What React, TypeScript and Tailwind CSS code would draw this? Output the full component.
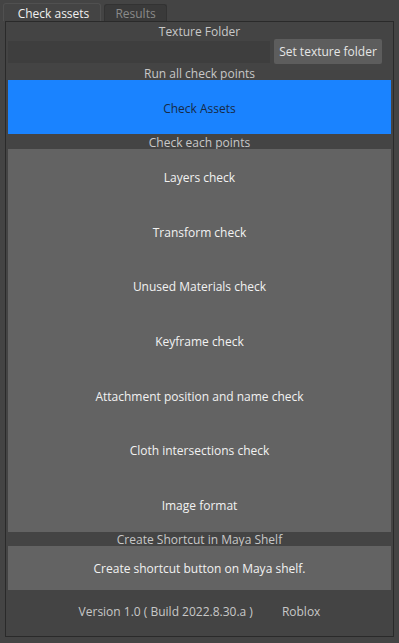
import React from 'react';

const checks = [
  'Layers check',
  'Transform check',
  'Unused Materials check',
  'Keyframe check',
  'Attachment position and name check',
  'Cloth intersections check',
  'Image format',
];

const SectionLabel: React.FC<{ text: string; className?: string }> = ({ text, className }) => (
  <div className={`text-center text-[12px] leading-[15px] text-[#c8c8c8] ${className ?? ''}`}>{text}</div>
);

const App: React.FC = () => {
  return (
    <div
      className="w-[399px] h-[643px] bg-[#444444] overflow-hidden"
      style={{ fontFamily: '"Open Sans", "Noto Sans", sans-serif' }}
    >
      {/* tabs */}
      <div className="flex items-end gap-[3px] pl-[3px] pt-[3px] h-[21px]">
        <div className="h-[18px] w-[98px] pl-[3px] pt-[1px] rounded-t-[3px] border border-b-0 border-[#505050] bg-[#444444] text-[12px] leading-[17px] text-[#f0f0f0] text-center">
          Check assets
        </div>
        <div className="h-[17px] w-[63px] pt-[1px] rounded-t-[3px] border border-b-0 border-[#333333] bg-[#3a3a3a] text-[12px] leading-[16px] text-[#8a8a8a] text-center">
          Results
        </div>
      </div>

      {/* pane */}
      <div className="mx-[5px] h-[616px] border border-[#2a2a2a] bg-[#444444] px-[2px] flex flex-col">
        <SectionLabel text="Texture Folder" className="h-[17px] pt-[2px] shrink-0" />
        <div className="flex items-center gap-[4px] h-[25px] shrink-0">
          <div className="h-[22px] w-[262px] bg-[#3e3e3e]" />
          <button className="h-[25px] w-[108px] pt-[1px] rounded-[2px] bg-[#5d5d5d] text-[12px] text-[#e6e6e6]">
            Set texture folder
          </button>
        </div>
        <SectionLabel text="Run all check points" className="h-[16px] pt-[2px] shrink-0" />
        <button className="h-[54px] w-full shrink-0 pt-[3px] bg-[#1a83ff] text-[12px] text-[#172a45]">Check Assets</button>
        <SectionLabel text="Check each points" className="h-[15px] pt-[1px] shrink-0" />
        <div className="h-[383px] shrink-0 grid grid-rows-7 bg-[#636363]">
          {checks.map(c => (
            <button key={c} className="w-full pt-[3px] text-[12px] text-[#f2f2f2]">
              {c}
            </button>
          ))}
        </div>
        <SectionLabel text="Create Shortcut in Maya Shelf" className="h-[14px] shrink-0" />
        <button className="h-[44px] w-full shrink-0 pt-[2px] bg-[#636363] text-[12px] text-[#f2f2f2]">
          Create shortcut button on Maya shelf.
        </button>
        <div className="flex justify-center gap-[29px] mt-[14px] text-[12px] leading-[15px] text-[#c8c8c8]">
          <span>Version 1.0 ( Build 2022.8.30.a )</span>
          <span>Roblox</span>
        </div>
      </div>
    </div>
  );
};

export default App;
